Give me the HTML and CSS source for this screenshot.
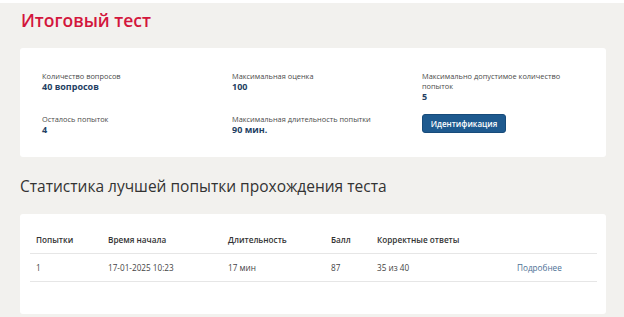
FILE: index.html
```html
<!DOCTYPE html>
<html lang="ru">
<head>
    <meta charset="UTF-8">
    <meta name="viewport" content="width=device-width, initial-scale=1.0">
    <title>Итоговый тест</title>
    <link rel="stylesheet" href="styles.css">
</head>
<body>
    <div class="page">
        <h1 class="title">Итоговый тест</h1>

        <div class="card info">
            <div class="item">
                <div class="label">Количество вопросов</div>
                <div class="value">40 вопросов</div>
            </div>
            <div class="item">
                <div class="label">Максимальная оценка</div>
                <div class="value">100</div>
            </div>
            <div class="item">
                <div class="label">Максимально допустимое количество попыток</div>
                <div class="value">5</div>
            </div>
            <div class="item">
                <div class="label">Осталось попыток</div>
                <div class="value">4</div>
            </div>
            <div class="item">
                <div class="label">Максимальная длительность попытки</div>
                <div class="value">90 мин.</div>
            </div>
            <div class="item">
                <button class="btn">Идентификация</button>
            </div>
        </div>

        <h2 class="subtitle">Статистика лучшей попытки прохождения теста</h2>

        <div class="card stats">
            <div class="row head">
                <div>Попытки</div>
                <div>Время начала</div>
                <div>Длительность</div>
                <div>Балл</div>
                <div>Корректные ответы</div>
                <div></div>
            </div>
            <div class="row">
                <div>1</div>
                <div>17-01-2025 10:23</div>
                <div>17 мин</div>
                <div>87</div>
                <div>35 из 40</div>
                <div><a href="#" class="more">Подробнее</a></div>
            </div>
        </div>
    </div>
</body>
</html>
```

FILE: styles.css
```css
body {
    margin: 0;
    padding: 0;
    background-color: #f2f1ee;
    border-top: 3px solid #ffffff;
    font-family: 'Open Sans', 'Noto Sans', sans-serif;
    color: #333;
}
.page {
    padding: 0 18px 0 20px;
}
.title {
    margin: 0;
    padding: 4px 0 0 1px;
    font-size: 17.5px;
    line-height: 26px;
    font-weight: 600;
    color: #d3163c;
}
.card {
    background: #ffffff;
    border-radius: 3px;
}
.info {
    margin-top: 15px;
    padding: 23px 22px 22px;
    display: grid;
    grid-template-columns: 190px 190px 190px;
    row-gap: 12px;
}
.label {
    font-size: 7.4px;
    line-height: 10px;
    color: #4a4a4a;
    max-width: 150px;
}
.value {
    font-size: 9px;
    line-height: 11px;
    font-weight: 700;
    color: #243f63;
}
.btn {
    display: block;
    background: #1e5a8f;
    color: #ffffff;
    border: 1px solid #174b7a;
    border-radius: 3px;
    width: 84px;
    height: 19px;
    padding: 0;
    font-family: inherit;
    font-size: 8px;
    font-weight: 600;
    cursor: pointer;
}
.subtitle {
    margin: 0;
    padding: 18px 0 0;
    font-size: 15.5px;
    line-height: 22px;
    font-weight: 400;
    color: #333;
}
.stats {
    margin-top: 17px;
    padding: 18px 9px 32px 10px;
}
.row {
    display: grid;
    grid-template-columns: 72px 120px 103px 46px 140px 1fr;
    border-bottom: 1px solid #e6e6e6;
    height: 27px;
    align-items: center;
    font-size: 8.2px;
    color: #444;
}
.row div {
    padding-left: 6px;
}
.row.head {
    height: 19px;
    align-items: start;
    font-weight: 600;
    color: #333;
    padding-top: 2px;
}
.more {
    color: #4d7096;
    text-decoration: none;
}
```
